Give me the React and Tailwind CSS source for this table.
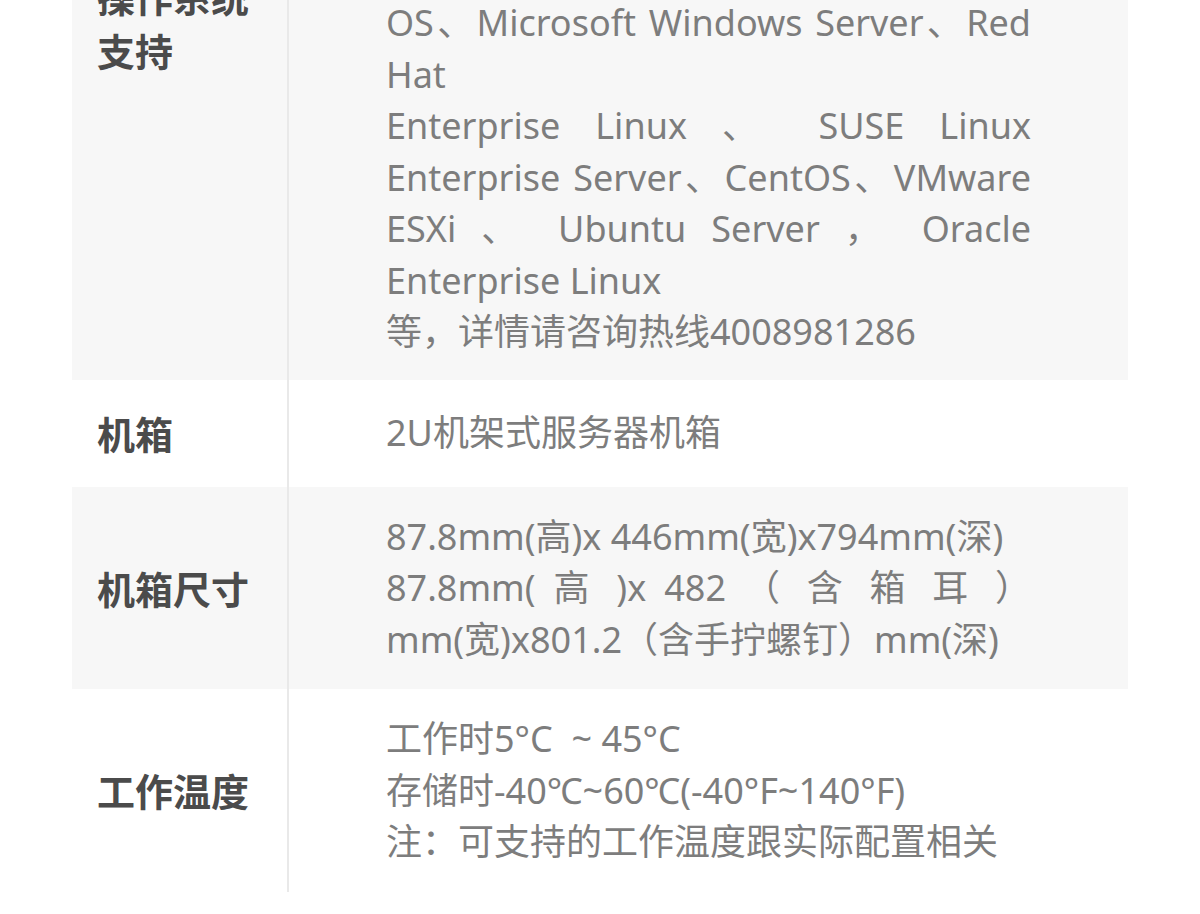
const rows = [
  {
    label: '操作系统支持',
    shade: true,
    pad: 'py-[22px]',
    lines: [
      ['支持主流服务器操作系统，包括：', false],
      ['中标麒麟、银河麒麟、统信UOS、', false],
      ['Red Hat Enterprise Linux 、 SUSE', true],
      ['Linux Enterprise Server、CentOS、', true],
      ['Ubuntu Server、Oracle Linux、', false],
      ['Kylin OS、Deepin、Novell NetWare', true],
      ['OS、Microsoft Windows Server、Red', true],
      ['Hat', false],
      ['Enterprise Linux 、 SUSE Linux', true],
      ['Enterprise Server、CentOS、VMware', true],
      ['ESXi 、 Ubuntu Server ， Oracle', true],
      ['Enterprise Linux', false],
      ['等，详情请咨询热线4008981286', false],
    ],
  },
  {
    label: '机箱',
    shade: false,
    pad: 'py-[23px] min-h-[107px]',
    lines: [['2U机架式服务器机箱', false]],
  },
  {
    label: '机箱尺寸',
    shade: true,
    pad: 'py-[24px]',
    lines: [
      ['87.8mm(高)x 446mm(宽)x794mm(深)', false],
      ['87.8mm( 高 )x 482 （ 含 箱 耳 ）', true],
      ['mm(宽)x801.2（含手拧螺钉）mm(深)', false],
    ],
  },
  {
    label: '工作温度',
    shade: false,
    pad: 'py-[24px]',
    lines: [
      ['工作时5°C\u00a0\u00a0~\u00a045°C', false],
      ['存储时-40℃~60℃(-40°F~140°F)', false],
      ['注：可支持的工作温度跟实际配置相关', false],
    ],
  },
]

export default function App() {
  return (
    <div className="min-h-screen bg-white overflow-hidden font-['Noto_Sans','Noto_Sans_CJK_SC',sans-serif]">
      <div className="w-[1056px] mx-auto -mt-[334px] pb-10">
        {rows.map(row => (
          <div
            key={row.label}
            className={`flex items-stretch ${row.shade ? 'bg-[#f7f7f7]' : 'bg-white'}`}
          >
            <div className="w-[215px] shrink-0 pl-[25px] pr-[20px] flex items-center">
              <span className="text-[38px] leading-[54px] font-bold text-[#4b4b4b] font-['Noto_Sans_CJK_SC',sans-serif]">
                {row.label}
              </span>
            </div>
            <div className={`flex-1 border-l-2 border-[#e9e9e9] pl-[97px] pr-[97px] flex flex-col justify-center ${row.pad}`}>
              {row.lines.map(([text, justify], i) => (
                <div
                  key={i}
                  className={`text-[36px] leading-[51.5px] text-[#7d7d7d] ${justify ? 'text-justify [text-align-last:justify]' : ''}`}
                >
                  {text}
                </div>
              ))}
            </div>
          </div>
        ))}
      </div>
    </div>
  )
}
